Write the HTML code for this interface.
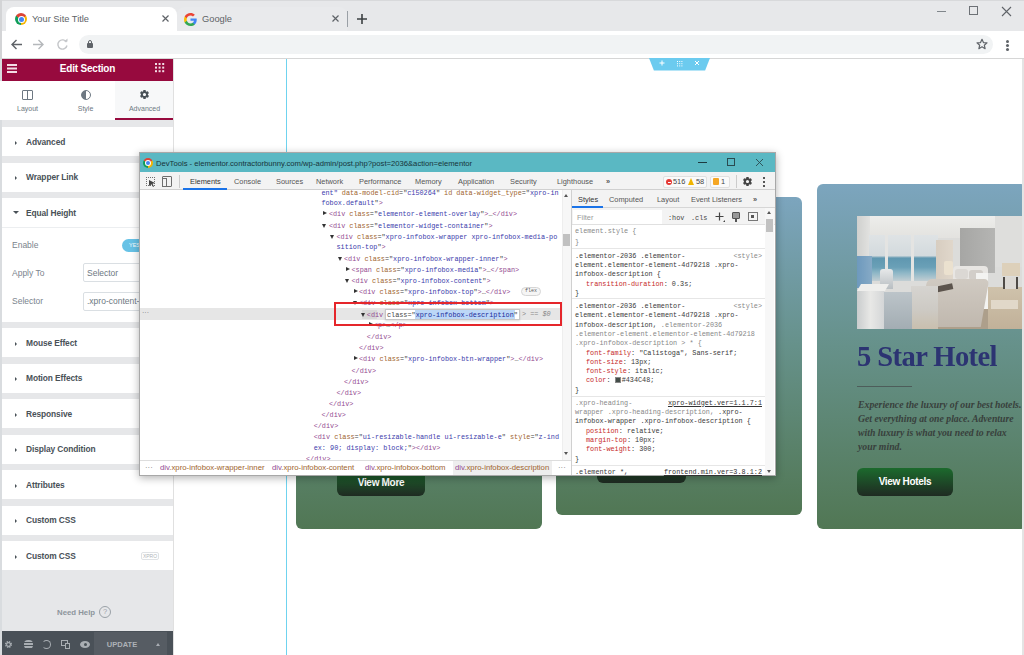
<!DOCTYPE html>
<html><head><meta charset="utf-8">
<style>
*{margin:0;padding:0;box-sizing:border-box}
html,body{width:1024px;height:655px;overflow:hidden;background:#fff;font-family:"Liberation Sans",sans-serif;position:relative}
.a{position:absolute}
.mono{font-family:"Liberation Mono",monospace}
/* chrome */
#strip{left:0;top:0;width:1024px;height:32px;background:#e7e8ea;border-top:1.5px solid #d8d9db}
#tab1{left:6px;top:7px;width:171px;height:25px;background:#fff;border-radius:8px 8px 0 0}
#toolbar{left:0;top:31px;width:1024px;height:27px;background:#fff}
#omni{left:79px;top:35px;width:914px;height:19px;background:#f1f3f4;border-radius:10px}
#tbline{left:0;top:58px;width:1024px;height:1px;background:#d6d6d6}
.tabt{font-size:9.3px;color:#606367;top:13.5px}
/* elementor panel */
#panel{left:0;top:59px;width:173px;height:596px;background:#e6e7e9}
#phead{left:2px;top:59px;width:171px;height:22px;background:#970a3e}
#ptabs{left:0;top:81px;width:173px;height:39px;background:#fff}
.row{left:2px;width:171px;height:29px;background:#fff}
.rlab{left:26px;font-size:8.4px;font-weight:bold;color:#495157;letter-spacing:-0.1px}
.ptl{top:104.5px;text-align:center;font-size:7px;color:#6d7882}
.clab{left:12px;font-size:8.5px;color:#7a848d}
.tri{left:15px;width:0;height:0;border-top:2.5px solid transparent;border-bottom:2.5px solid transparent;border-left:2.5px solid #495157;margin-top:0.5px}
#pbot{left:2px;top:631px;width:171px;height:24px;background:#4a5158}
/* cards */
.card{border-radius:6px;background:linear-gradient(#7ca5be 0%,#66918a 47%,#517754 100%)}
.btn{border-radius:6px;background:linear-gradient(#1c6a2d,#1f2a22);color:#fff;font-size:10px;font-weight:bold;text-align:center;line-height:27px;letter-spacing:-0.3px}
/* devtools */
.dl{font-family:"Liberation Mono",monospace;font-size:6.82px;line-height:11px;white-space:nowrap;color:#222}
.sl{font-family:"Liberation Mono",monospace;font-size:6.82px;line-height:10px;white-space:nowrap;color:#3a3a3a}
.tg{color:#934a91}.an{color:#a0642e}.av{color:#3b3bab}.tx{color:#444}.pn{color:#c62a2a}
.trr{position:absolute;width:0;height:0;border-top:2.5px solid transparent;border-bottom:2.5px solid transparent;border-left:4px solid #333}
.trd{position:absolute;width:0;height:0;border-left:2.5px solid transparent;border-right:2.5px solid transparent;border-top:4px solid #333}
.dtab{top:177px;font-size:7.4px;color:#555;white-space:nowrap}
.stab{top:195px;font-size:7.4px;color:#555;white-space:nowrap}
.bc{top:463px;font-family:"Liberation Sans",sans-serif;font-size:7.75px;white-space:nowrap}

#dt{left:139px;top:152px;width:637px;height:324px;background:#fff;border:1px solid #a8a8a8;box-shadow:0 2px 8px rgba(0,0,0,.3)}
</style></head><body>
<div class="a" id="strip"></div>
<div class="a" id="tab1"></div>
<div class="a" style="left:177px;top:7px;width:170px;height:25px;background:#e9eaec;border-radius:8px 8px 0 0"></div>
<div class="a" id="toolbar"></div>
<div class="a" id="omni"></div>
<div class="a" id="tbline"></div>
<div class="a" style="left:0;top:0;width:1.5px;height:59px;background:#d3d4d6"></div>
<!-- chrome favicon -->
<div class="a" style="left:15px;top:13px;width:12px;height:12px;border-radius:50%;background:conic-gradient(from -60deg,#db4437 0 120deg,#f4b400 120deg 240deg,#0f9d58 240deg 360deg)"></div>
<div class="a" style="left:17.5px;top:15.5px;width:7px;height:7px;border-radius:50%;background:#fff"></div>
<div class="a" style="left:18.5px;top:16.5px;width:5px;height:5px;border-radius:50%;background:#4285f4"></div>
<div class="a tabt" style="left:32px">Your Site Title</div>
<svg class="a" style="left:161px;top:14px" width="9" height="9" viewBox="0 0 9 9"><path d="M1.5 1.5L7.5 7.5M7.5 1.5L1.5 7.5" stroke="#5f6368" stroke-width="1.2"/></svg>
<!-- google G -->
<svg class="a" style="left:184px;top:13px" width="13" height="13" viewBox="0 0 24 24">
<path d="M23.5 12.3c0-.8-.1-1.6-.2-2.3H12v4.5h6.5c-.3 1.5-1.1 2.7-2.4 3.6v3h3.9c2.200-2.100 3.500-5.100 3.500-8.800z" fill="#4285f4"/>
<path d="M12 24c3.2 0 6-1.100 8-2.900l-3.900-3c-1.100.7-2.500 1.200-4.100 1.200-3.100 0-5.800-2.100-6.700-5H1.300v3.100C3.300 21.300 7.300 24 12 24z" fill="#34a853"/>
<path d="M5.300 14.300c-.2-.7-.4-1.500-.4-2.300s.1-1.600.4-2.300V6.600H1.300C.5 8.200 0 10 0 12s.5 3.800 1.300 5.400l4-3.100z" fill="#fbbc05"/>
<path d="M12 4.800c1.800 0 3.300.6 4.600 1.800l3.400-3.400C18 1.200 15.200 0 12 0 7.300 0 3.300 2.700 1.300 6.600l4 3.100c.9-2.800 3.600-4.900 6.700-4.900z" fill="#ea4335"/>
</svg>
<div class="a tabt" style="left:202px">Google</div>
<svg class="a" style="left:331px;top:14px" width="9" height="9" viewBox="0 0 9 9"><path d="M1.5 1.5L7.5 7.5M7.5 1.5L1.5 7.5" stroke="#5f6368" stroke-width="1.2"/></svg>
<div class="a" style="left:347px;top:11px;width:1px;height:16px;background:#9aa0a6"></div>
<svg class="a" style="left:356px;top:13px" width="12" height="12" viewBox="0 0 12 12"><path d="M6 1v10M1 6h10" stroke="#3c4043" stroke-width="1.6"/></svg>
<!-- window controls -->
<div class="a" style="left:937px;top:11px;width:9px;height:1px;background:#80868b"></div>
<div class="a" style="left:969px;top:6px;width:9px;height:9px;border:1px solid #6d7176"></div>
<svg class="a" style="left:1001px;top:6px" width="11" height="11" viewBox="0 0 11 11"><path d="M1 1L10 10M10 1L1 10" stroke="#5f6368" stroke-width="1.1"/></svg>
<!-- nav -->
<svg class="a" style="left:10px;top:38px" width="13" height="13" viewBox="0 0 13 13"><path d="M12 6.5H2M6.5 2L2 6.5L6.5 11" stroke="#5f6368" stroke-width="1.4" fill="none"/></svg>
<svg class="a" style="left:32px;top:38px" width="13" height="13" viewBox="0 0 13 13"><path d="M1 6.5H11M6.5 2L11 6.5L6.5 11" stroke="#b5b8bb" stroke-width="1.4" fill="none"/></svg>
<svg class="a" style="left:56px;top:38px" width="13" height="13" viewBox="0 0 13 13"><path d="M10.5 4.2A4.6 4.6 0 1 0 11 7.5" stroke="#c4c6c9" stroke-width="1.4" fill="none"/><path d="M8 3.5L11.5 3.5L11.5 0.5z" fill="#c4c6c9"/></svg>
<div class="a" style="left:87px;top:43px;width:6px;height:5px;background:#5f6368;border-radius:1px"></div>
<div class="a" style="left:88px;top:40px;width:4px;height:5px;border:1.1px solid #5f6368;border-radius:2px 2px 0 0"></div>
<svg class="a" style="left:976px;top:38px" width="12" height="12" viewBox="0 0 24 24"><path d="M12 2.5l2.9 6.6 7.100.6-5.400 4.700 1.600 7-6.200-3.700-6.200 3.700 1.600-7L2 9.700l7.100-.6z" stroke="#5f6368" stroke-width="2.4" fill="none" stroke-linejoin="round"/></svg>
<div class="a" style="left:1006px;top:40px;width:3px;height:3px;border-radius:50%;background:#5f6368;box-shadow:0 4px 0 #5f6368,0 8px 0 #5f6368"></div>

<div class="a" id="panel"></div>
<div class="a" style="left:0;top:59px;width:2px;height:596px;background:#d9dcdf"></div>
<div class="a" style="left:173px;top:59px;width:1px;height:596px;background:#e0e0e0"></div>
<div class="a" id="phead"></div>
<div class="a" style="left:7px;top:64px;width:10px;height:1.6px;background:#f3dde5;box-shadow:0 3.5px 0 #f3dde5,0 7px 0 #f3dde5"></div>
<div class="a" style="left:2px;top:62.5px;width:171px;text-align:center;font-size:10px;font-weight:bold;color:#fff;letter-spacing:-0.2px">Edit Section</div>
<div class="a" style="left:155px;top:63px;width:2.4px;height:2.4px;background:#f3dde5;box-shadow:3.6px 0 0 #f3dde5,7.2px 0 0 #f3dde5,0 3.6px 0 #f3dde5,3.6px 3.6px 0 #f3dde5,7.2px 3.6px 0 #f3dde5,0 7.2px 0 #f3dde5,3.6px 7.2px 0 #f3dde5,7.2px 7.2px 0 #f3dde5"></div>
<div class="a" id="ptabs"></div>
<div class="a" style="left:115px;top:81px;width:58px;height:39px;background:#f7f8f9"></div>
<div class="a" style="left:115px;top:118px;width:58px;height:2px;background:#970a3e"></div>
<!-- layout icon -->
<div class="a" style="left:22px;top:90px;width:11px;height:10px;border:1.3px solid #6d7882;border-radius:1px"></div>
<div class="a" style="left:27px;top:90px;width:1.3px;height:10px;background:#6d7882"></div>
<div class="a ptl" style="left:0;width:55px">Layout</div>
<!-- style icon -->
<div class="a" style="left:81px;top:90px;width:10px;height:10px;border-radius:50%;border:1.3px solid #6d7882;background:linear-gradient(90deg,#6d7882 50%,transparent 50%)"></div>
<div class="a ptl" style="left:58px;width:55px">Style</div>
<!-- gear -->
<svg class="a" style="left:139px;top:89px" width="11" height="11" viewBox="0 0 24 24"><path fill="#495157" d="M19.4 13c.04-.33.06-.66.06-1s-.02-.67-.06-1l2.1-1.650c.19-.15.24-.42.12-.64l-2-3.460c-.12-.22-.39-.3-.61-.22l-2.490 1c-.52-.4-1.080-.73-1.690-.98l-.38-2.650C14.460 2.180 14.250 2 14 2h-4c-.25 0-.46.18-.49.42l-.38 2.650c-.61.25-1.170.59-1.690.98l-2.490-1c-.23-.09-.49 0-.61.22l-2 3.460c-.13.22-.07.49.12.64L4.570 11c-.4.33-.6.66-.6 1s.2.67.6 1l-2.1 1.650c-.19.15-.24.42-.12.64l2 3.460c.12.22.39.3.61.22l2.490-1c.52.4 1.080.73 1.690.98l.38 2.650c.3.24.24.42.49.42h4c.25 0 .46-.18.49-.42l.38-2.650c.61-.25 1.170-.59 1.690-.98l2.490 1c.23.09.49 0 .61-.22l2-3.460c.12-.22.07-.49-.12-.64L19.400 13zM12 15.500c-1.930 0-3.500-1.570-3.500-3.500s1.570-3.500 3.500-3.500 3.500 1.570 3.500 3.500-1.570 3.500-3.500 3.500z"/></svg>
<div class="a ptl" style="left:116px;width:57px">Advanced</div>

<div class="a row" style="top:127px"></div>
<div class="a row" style="top:163px"></div>
<div class="a row" style="top:198px;height:124px"></div>
<div class="a" style="left:2px;top:227px;width:171px;height:1px;background:#eceef0"></div>
<div class="a row" style="top:328px"></div>
<div class="a row" style="top:364px"></div>
<div class="a row" style="top:399px"></div>
<div class="a row" style="top:435px"></div>
<div class="a row" style="top:470px"></div>
<div class="a row" style="top:506px"></div>
<div class="a row" style="top:541px"></div>

<div class="a tri" style="top:140px"></div><div class="a rlab" style="top:137px">Advanced</div>
<div class="a tri" style="top:175px"></div><div class="a rlab" style="top:172px">Wrapper Link</div>
<div class="a" style="left:13px;top:211px;width:0;height:0;border-left:3px solid transparent;border-right:3px solid transparent;border-top:3px solid #495157"></div><div class="a rlab" style="top:208px">Equal Height</div>
<div class="a tri" style="top:341px"></div><div class="a rlab" style="top:338px">Mouse Effect</div>
<div class="a tri" style="top:376px"></div><div class="a rlab" style="top:373px">Motion Effects</div>
<div class="a tri" style="top:412px"></div><div class="a rlab" style="top:409px">Responsive</div>
<div class="a tri" style="top:447px"></div><div class="a rlab" style="top:444px">Display Condition</div>
<div class="a tri" style="top:483px"></div><div class="a rlab" style="top:480px">Attributes</div>
<div class="a tri" style="top:518px"></div><div class="a rlab" style="top:515px">Custom CSS</div>
<div class="a tri" style="top:554px"></div><div class="a rlab" style="top:551px">Custom CSS</div>
<div class="a" style="left:141px;top:552px;width:18px;height:8px;border:1px solid #dfe2e5;border-radius:2px;font-size:5px;color:#b0b5ba;text-align:center;line-height:6px">XPRO</div>

<div class="a clab" style="top:240px">Enable</div>
<div class="a" style="left:122px;top:239px;width:30px;height:13px;border-radius:7px;background:#67c2e6"></div>
<div class="a" style="left:129px;top:242px;font-size:5.5px;color:#fff">YES</div>
<div class="a clab" style="top:268px">Apply To</div>
<div class="a" style="left:83px;top:263px;width:70px;height:19px;border:1px solid #dadfe3;border-radius:2px;background:#fff"></div>
<div class="a clab" style="left:87px;top:268px;color:#6d7882">Selector</div>
<div class="a clab" style="top:296px">Selector</div>
<div class="a" style="left:83px;top:292px;width:70px;height:19px;border:1px solid #dadfe3;border-radius:2px;background:#fff"></div>
<div class="a clab" style="left:87px;top:296px;color:#6d7882">.xpro-content-wrap</div>

<div class="a" style="left:57px;top:608px;font-size:7.8px;font-weight:bold;color:#8d959c;white-space:nowrap">Need Help</div><div class="a" style="left:99px;top:606px;width:12px;height:12px;border:1px solid #9aa1a7;border-radius:50%;font-size:7.5px;line-height:10px;text-align:center;color:#9aa1a7">?</div>
<div class="a" id="pbot"></div>
<div class="a" style="left:94px;top:632px;width:73px;height:23px;background:#565c63"></div>
<div class="a" style="left:94px;top:639.5px;width:56px;text-align:center;font-size:7.5px;font-weight:bold;color:#adb2b7;letter-spacing:0px">UPDATE</div>
<div class="a" style="left:156px;top:643px;width:0;height:0;border-left:2.5px solid transparent;border-right:2.5px solid transparent;border-bottom:3px solid #a9aeb3"></div>
<svg class="a" style="left:4px;top:640px" width="9" height="9" viewBox="0 0 24 24"><circle cx="12" cy="12" r="7" fill="none" stroke="#a9aeb3" stroke-width="5" stroke-dasharray="3.3 2.200"/><circle cx="12" cy="12" r="5" fill="none" stroke="#a9aeb3" stroke-width="3"/></svg>
<div class="a" style="left:24px;top:640px;width:9px;height:9px;border-radius:45%;background:repeating-linear-gradient(#a9aeb3 0 2px,#495157 2px 3px)"></div>
<div class="a" style="left:42px;top:640px;width:9px;height:9px;border-radius:50%;border:1.4px solid #a9aeb3;border-left-color:transparent"></div>
<div class="a" style="left:61px;top:640px;width:7px;height:6px;border:1.3px solid #a9aeb3"></div>
<div class="a" style="left:65px;top:643px;width:5px;height:6px;border:1.3px solid #a9aeb3;background:#495157"></div>
<div class="a" style="left:80px;top:641px;width:10px;height:7px;border-radius:50%;background:#a9aeb3"></div>
<div class="a" style="left:83.5px;top:643px;width:3px;height:3px;border-radius:50%;background:#495157"></div>

<div class="a" style="left:286px;top:59px;width:1px;height:596px;background:#6fd3ef"></div>
<div class="a card" style="left:296px;top:197px;width:246px;height:332px"></div>
<div class="a card" style="left:556px;top:197px;width:246px;height:318px"></div>
<div class="a card" style="left:817px;top:184px;width:210px;height:345px"></div>
<div class="a btn" style="left:337px;top:469px;width:88px;height:27px">View More</div>
<div class="a btn" style="left:597px;top:456px;width:89px;height:27px">View Hotels</div>
<!-- card 3 -->
<div class="a" id="img" style="left:857px;top:216px;width:165px;height:113px;overflow:hidden;background:#dcdcda;filter:blur(0.5px)">
 <div class="a" style="left:0;top:0;width:165px;height:22px;background:linear-gradient(#ededeb,#e3e2df)"></div>
 <div class="a" style="left:0;top:0;width:13px;height:42px;background:linear-gradient(90deg,#cfd0ce,#e2e2e0)"></div>
 <div class="a" style="left:12px;top:19px;width:69px;height:46px;background:linear-gradient(#dfe3e5 0,#d3dadd 45%,#5f97b0 50%,#6aa0b7 70%,#8db6c6 82%,#c2ced3 100%)"></div>
 <div class="a" style="left:28px;top:19px;width:3px;height:46px;background:#e4e4e2"></div>
 <div class="a" style="left:54px;top:19px;width:3px;height:46px;background:#e4e4e2"></div>
 <div class="a" style="left:0;top:40px;width:15px;height:38px;background:linear-gradient(90deg,#6d99bd,#86aac6)"></div>
 <div class="a" style="left:23px;top:53px;width:13px;height:20px;background:linear-gradient(#e6e8e9,#b8bec2);border-radius:3px 3px 0 0"></div>
 <div class="a" style="left:79px;top:24px;width:17px;height:40px;background:linear-gradient(90deg,#d7cdc0,#e0d7cb)"></div>
 <div class="a" style="left:87px;top:45px;width:9px;height:14px;background:#ebe1cf;border-radius:2px"></div>
 <div class="a" style="left:138px;top:0;width:27px;height:51px;background:#dededc"></div>
 <div class="a" style="left:103px;top:12px;width:35px;height:45px;background:linear-gradient(90deg,#a6a6a4,#b5b5b3)"></div>
 <div class="a" style="left:96px;top:50px;width:35px;height:21px;background:#e8e6e3;border-radius:4px"></div>
 <div class="a" style="left:98px;top:53px;width:13px;height:10px;background:#dbd8d4;border-radius:3px"></div>
 <div class="a" style="left:112px;top:54px;width:14px;height:10px;background:#d2cec9;border-radius:3px"></div>
 <div class="a" style="left:119px;top:57px;width:12px;height:37px;background:#f3f3f1"></div>
 <div class="a" style="left:80px;top:93px;width:85px;height:20px;background:#ad9f8b"></div>
 <div class="a" style="left:66px;top:63px;width:62px;height:48px;background:linear-gradient(#d0cac2,#c0b8ae);border-radius:5px 5px 0 0;transform:skewX(-10deg)"></div>
 <div class="a" style="left:68px;top:70px;width:28px;height:6px;background:#5c544d;transform:rotate(-12deg)"></div>
 <div class="a" style="left:131px;top:71px;width:34px;height:42px;background:linear-gradient(#cfc2ab,#c1b199)"></div>
 <div class="a" style="left:134px;top:84px;width:27px;height:9px;background:#e1d8c9"></div>
 <div class="a" style="left:145px;top:47px;width:18px;height:13px;background:#ddd0ba"></div>
 <div class="a" style="left:146px;top:61px;width:15px;height:12px;border-left:2.5px solid #4e4a46;border-right:2.5px solid #4e4a46;background:#dcd9d4"></div>
 <div class="a" style="left:54px;top:70px;width:27px;height:43px;background:linear-gradient(#d6d4d0 0,#cdcac4 55%,#c9bfae 100%)"></div>
 <div class="a" style="left:25px;top:76px;width:30px;height:37px;background:linear-gradient(#bcc4c9,#a3adb3)"></div>
 <div class="a" style="left:0;top:72px;width:27px;height:41px;background:linear-gradient(90deg,#c9cccd,#e8e8e6 50%,#d4d6d7)"></div>
 <div class="a" style="left:2px;top:68px;width:28px;height:7px;background:#eeeeec;transform:skewX(-30deg)"></div>
</div>
<div class="a" style="left:857px;top:340px;font-family:'Liberation Serif',serif;font-size:29px;font-weight:bold;color:#2c3472;white-space:nowrap;letter-spacing:-0.6px;transform:scaleX(0.985);transform-origin:0 0">5 Star Hotel</div>
<div class="a" style="left:857px;top:385.5px;width:55px;height:1.5px;background:#4d5d5a"></div>
<div class="a" style="left:858px;top:398px;width:170px;font-family:'Liberation Serif',serif;font-style:italic;font-weight:bold;font-size:9.75px;line-height:13.9px;color:#38403c;white-space:nowrap">Experience the luxury of our best hotels.<br>Get everything at one place. Adventure<br>with luxury is what you need to relax<br>your mind.</div>
<div class="a btn" style="left:857px;top:468px;width:96px;height:27.5px">View Hotels</div>
<!-- section handle -->
<div class="a" style="left:649px;top:58px;width:61px;height:12.5px;background:#6ccbef;clip-path:polygon(0 0,100% 0,92% 100%,8% 100%)"></div>
<svg class="a" style="left:658px;top:59px" width="8" height="8" viewBox="0 0 8 8"><path d="M4 1.500V6.500M1.500 4H6.500" stroke="#fff" stroke-width="1"/></svg>
<div class="a" style="left:677px;top:60.5px;width:1.2px;height:1.2px;background:#fff;box-shadow:2.2px 0 0 #fff,4.4px 0 0 #fff,0 2.2px 0 #fff,2.2px 2.2px 0 #fff,4.4px 2.2px 0 #fff,0 4.4px 0 #fff,2.2px 4.4px 0 #fff,4.4px 4.4px 0 #fff"></div>
<svg class="a" style="left:693px;top:59px" width="8" height="8" viewBox="0 0 8 8"><path d="M2 2L6 6M6 2L2 6" stroke="#fff" stroke-width="1"/></svg>
<div class="a" style="left:1022px;top:59px;width:2px;height:596px;background:#e4e4e4"></div>
<div class="a" id="dt"></div>
<div class="a" style="left:140px;top:153px;width:635px;height:19px;background:#5ab8c3"></div>
<div class="a" style="left:143px;top:158px;width:10px;height:10px;border-radius:50%;background:conic-gradient(from -60deg,#db4437 0 120deg,#f4b400 120deg 240deg,#0f9d58 240deg 360deg)"></div>
<div class="a" style="left:145px;top:160px;width:6px;height:6px;border-radius:50%;background:#fff"></div>
<div class="a" style="left:146px;top:161px;width:4px;height:4px;border-radius:50%;background:#4285f4"></div>
<div class="a" style="left:156px;top:158.5px;font-size:7.66px;color:#17343a;white-space:nowrap">DevTools - elementor.contractorbunny.com/wp-admin/post.php?post=2036&amp;action=elementor</div>
<div class="a" style="left:698px;top:162px;width:9px;height:1px;background:#1d3a40"></div>
<div class="a" style="left:727px;top:158px;width:8px;height:8px;border:1px solid #2a4a50"></div>
<svg class="a" style="left:755px;top:158px" width="9" height="9" viewBox="0 0 9 9"><path d="M1 1L8 8M8 1L1 8" stroke="#2a4a50" stroke-width="0.9"/></svg>
<!-- toolbar -->
<div class="a" style="left:140px;top:172px;width:635px;height:18px;background:#f3f3f3;border-bottom:1px solid #d0d0d0"></div>
<div class="a" style="left:146px;top:177px;width:9px;height:9px;border:1px dotted #6e6e6e"></div>
<svg class="a" style="left:149px;top:180px" width="7" height="7" viewBox="0 0 7 7"><path d="M0 0L6 3L3.500 3.800L5 6.500L4 7L2.600 4.300L0 6z" fill="#444"/></svg>
<div class="a" style="left:162px;top:176px;width:10px;height:11px;border:1.1px solid #6e6e6e;border-radius:1px"></div>
<div class="a" style="left:162px;top:178px;width:5px;height:9px;border:1.1px solid #6e6e6e;background:#f3f3f3"></div>
<div class="a" style="left:179px;top:175px;width:1px;height:13px;background:#ccc"></div>
<div class="a dtab" style="left:190px;color:#333">Elements</div>
<div class="a" style="left:183px;top:188px;width:44px;height:2px;background:#1a73e8"></div>
<div class="a dtab" style="left:234px">Console</div>
<div class="a dtab" style="left:276px">Sources</div>
<div class="a dtab" style="left:316px">Network</div>
<div class="a dtab" style="left:359px">Performance</div>
<div class="a dtab" style="left:415px">Memory</div>
<div class="a dtab" style="left:458px">Application</div>
<div class="a dtab" style="left:510px">Security</div>
<div class="a dtab" style="left:557px">Lighthouse</div>
<div class="a dtab" style="left:606px;font-weight:bold">»</div>
<div class="a" style="left:663px;top:176px;width:44px;height:12px;border:1px solid #e0e0e0;border-radius:2px;background:#fafafa"></div>
<div class="a" style="left:666px;top:179px;width:6px;height:6px;border-radius:50%;background:#e53935"></div>
<div class="a" style="left:667.5px;top:181.5px;width:3px;height:1px;background:#fff"></div>
<div class="a dtab" style="left:673px;top:177px;color:#444">516</div>
<div class="a" style="left:688px;top:178px;width:0;height:0;border-left:3.5px solid transparent;border-right:3.5px solid transparent;border-bottom:7px solid #f0b400"></div>
<div class="a dtab" style="left:696px;top:177px;color:#444">58</div>
<div class="a" style="left:710px;top:176px;width:20px;height:12px;border:1px solid #e0e0e0;border-radius:2px;background:#fafafa"></div>
<div class="a" style="left:713px;top:178px;width:6px;height:7px;background:#f5a623;border-radius:1px"></div>
<div class="a dtab" style="left:721px;top:177px;color:#444">1</div>
<div class="a" style="left:736px;top:175px;width:1px;height:13px;background:#ccc"></div>
<svg class="a" style="left:742px;top:176px" width="11" height="11" viewBox="0 0 24 24"><path fill="#444" d="M19.4 13c.04-.33.06-.66.06-1s-.02-.67-.06-1l2.1-1.650c.19-.15.24-.42.12-.64l-2-3.460c-.12-.22-.39-.3-.61-.22l-2.490 1c-.52-.4-1.080-.73-1.690-.98l-.38-2.650C14.460 2.180 14.250 2 14 2h-4c-.25 0-.46.18-.49.42l-.38 2.650c-.61.25-1.170.59-1.690.98l-2.490-1c-.23-.09-.49 0-.61.22l-2 3.460c-.13.22-.07.49.12.64L4.570 11c-.4.33-.6.66-.6 1s.2.67.6 1l-2.1 1.650c-.19.15-.24.42-.12.64l2 3.460c.12.22.39.3.61.22l2.490-1c.52.4 1.080.73 1.690.98l.38 2.650c.3.24.24.42.49.42h4c.25 0 .46-.18.49-.42l.38-2.650c.61-.25 1.170-.59 1.690-.98l2.490 1c.23.09.49 0 .61-.22l2-3.460c.12-.22.07-.49-.12-.64L19.400 13zM12 15.500c-1.930 0-3.500-1.570-3.500-3.500s1.570-3.500 3.500-3.500 3.500 1.570 3.500 3.500-1.570 3.500-3.500 3.500z"/></svg>
<div class="a" style="left:763px;top:177px;width:2px;height:2px;background:#555;box-shadow:0 4px 0 #555,0 8px 0 #555"></div>
<!-- elements panel -->
<div class="a" style="left:140px;top:308px;width:422px;height:12px;background:#e6e6e6"></div>
<div class="a" style="left:142px;top:309px;font-size:7px;color:#777">···</div>
<div class="a dl" style="left:321.4px;top:188.1px"><span class="av">ent"</span> <span class="an">data-model-cid</span><span class="tx">="</span><span class="av">c150264</span><span class="tx">"</span> <span class="an">id</span> <span class="an">data-widget_type</span><span class="tx">="</span><span class="av">xpro-in</span></div>
<div class="a dl" style="left:321.4px;top:198.3px"><span class="av">fobox.default</span><span class="tx">"</span><span class="tg">&gt;</span></div>
<div class="a dl" style="left:328.9px;top:209.3px"><span class="tg">&lt;div</span> <span class="an">class</span><span class="tx">="</span><span class="av">elementor-element-overlay</span><span class="tx">"</span><span class="tg">&gt;</span><span class="tx">…</span><span class="tg">&lt;/div&gt;</span></div>
<div class="a trr" style="left:322.5px;top:211.3px"></div>
<div class="a dl" style="left:328.9px;top:220.5px"><span class="tg">&lt;div</span> <span class="an">class</span><span class="tx">="</span><span class="av">elementor-widget-container</span><span class="tx">"</span><span class="tg">&gt;</span></div>
<div class="a trd" style="left:322.0px;top:223.5px"></div>
<div class="a dl" style="left:336.5px;top:232.1px"><span class="tg">&lt;div</span> <span class="an">class</span><span class="tx">="</span><span class="av">xpro-infobox-wrapper xpro-infobox-media-po</span></div>
<div class="a trd" style="left:330.0px;top:235.1px"></div>
<div class="a dl" style="left:336.5px;top:242.2px"><span class="av">sition-top</span><span class="tx">"</span><span class="tg">&gt;</span></div>
<div class="a dl" style="left:344.0px;top:253.5px"><span class="tg">&lt;div</span> <span class="an">class</span><span class="tx">="</span><span class="av">xpro-infobox-wrapper-inner</span><span class="tx">"</span><span class="tg">&gt;</span></div>
<div class="a trd" style="left:338.0px;top:256.5px"></div>
<div class="a dl" style="left:351.5px;top:265.0px"><span class="tg">&lt;span</span> <span class="an">class</span><span class="tx">="</span><span class="av">xpro-infobox-media</span><span class="tx">"</span><span class="tg">&gt;</span><span class="tx">…</span><span class="tg">&lt;/span&gt;</span></div>
<div class="a trr" style="left:345.5px;top:267.0px"></div>
<div class="a dl" style="left:351.5px;top:275.5px"><span class="tg">&lt;div</span> <span class="an">class</span><span class="tx">="</span><span class="av">xpro-infobox-content</span><span class="tx">"</span><span class="tg">&gt;</span></div>
<div class="a trd" style="left:345.0px;top:278.5px"></div>
<div class="a dl" style="left:359.0px;top:287.0px"><span class="tg">&lt;div</span> <span class="an">class</span><span class="tx">="</span><span class="av">xpro-infobox-top</span><span class="tx">"</span><span class="tg">&gt;</span><span class="tx">…</span><span class="tg">&lt;/div&gt;</span></div>
<div class="a trr" style="left:353.5px;top:289.0px"></div>
<div class="a dl" style="left:359.0px;top:297.8px"><span class="tg">&lt;div</span> <span class="an">class</span><span class="tx">="</span><span class="av">xpro-infobox-bottom</span><span class="tx">"</span><span class="tg">&gt;</span></div>
<div class="a trd" style="left:353.0px;top:300.8px"></div>
<div class="a dl" style="left:374.0px;top:320.0px"><span class="tg">&lt;p&gt;</span><span class="tx">…</span><span class="tg">&lt;/p&gt;</span></div>
<div class="a trr" style="left:368.5px;top:322.0px"></div>
<div class="a dl" style="left:366.8px;top:331.8px"><span class="tg">&lt;/div&gt;</span></div>
<div class="a dl" style="left:359.0px;top:342.8px"><span class="tg">&lt;/div&gt;</span></div>
<div class="a dl" style="left:359.0px;top:354.0px"><span class="tg">&lt;div</span> <span class="an">class</span><span class="tx">="</span><span class="av">xpro-infobox-btn-wrapper</span><span class="tx">"</span><span class="tg">&gt;</span><span class="tx">…</span><span class="tg">&lt;/div&gt;</span></div>
<div class="a trr" style="left:353.5px;top:356.0px"></div>
<div class="a dl" style="left:351.5px;top:365.5px"><span class="tg">&lt;/div&gt;</span></div>
<div class="a dl" style="left:344.0px;top:376.5px"><span class="tg">&lt;/div&gt;</span></div>
<div class="a dl" style="left:336.5px;top:387.5px"><span class="tg">&lt;/div&gt;</span></div>
<div class="a dl" style="left:328.9px;top:399.4px"><span class="tg">&lt;/div&gt;</span></div>
<div class="a dl" style="left:321.4px;top:410.4px"><span class="tg">&lt;/div&gt;</span></div>
<div class="a dl" style="left:313.7px;top:421.4px"><span class="tg">&lt;/div&gt;</span></div>
<div class="a dl" style="left:313.7px;top:432.4px"><span class="tg">&lt;div</span> <span class="an">class</span><span class="tx">="</span><span class="av">ui-resizable-handle ui-resizable-e</span><span class="tx">"</span> <span class="an">style</span><span class="tx">="</span><span class="av">z-ind</span></div>
<div class="a dl" style="left:313.7px;top:443.3px"><span class="av">ex: 90; display: block;</span><span class="tx">"</span><span class="tg">&gt;&lt;/div&gt;</span></div>
<div class="a dl" style="left:306.0px;top:454.0px"><span class="tg">&lt;/div&gt;</span></div>
<div class="a" style="left:362px;top:310px;width:15px;height:9px;background:#d8d8d8"></div>
<div class="a trd" style="left:360.5px;top:312.5px"></div>
<div class="a dl" style="left:366.8px;top:309.5px"><span class="tg">&lt;div</span></div>
<div class="a" style="left:385px;top:309px;width:135px;height:11px;background:#fff;border:1px solid #c6c6c6;box-shadow:0 1px 2px rgba(0,0,0,.15)"></div>
<div class="a" style="left:415px;top:310px;width:100px;height:9px;background:#bcd7f7"></div>
<div class="a dl" style="left:387px;top:309.5px"><span class="tx">class="</span><span class="av" style="color:#1b2a9a">xpro-infobox-description</span><span class="tx">"</span></div>
<div class="a dl" style="left:522px;top:308.5px;color:#888"><span>&gt; == </span><i>$0</i></div>
<div class="a" style="left:521px;top:287px;width:20px;height:9px;border:1px solid #d5d5d5;border-radius:5px;background:#f5f5f5;font-size:5px;line-height:7px;color:#555;text-align:center;font-family:'Liberation Mono',monospace">flex</div>
<div class="a" style="left:333.5px;top:302.3px;width:228.5px;height:24px;border:2px solid #e5262b"></div>
<!-- elements scrollbar -->
<div class="a" style="left:562px;top:190px;width:9px;height:270px;background:#f7f7f7;border-left:1px solid #eee"></div>
<div class="a" style="left:564px;top:194px;width:0;height:0;border-left:2.5px solid transparent;border-right:2.5px solid transparent;border-bottom:3px solid #555"></div>
<div class="a" style="left:563px;top:234px;width:7px;height:12px;background:#c1c1c1"></div>
<div class="a" style="left:564px;top:452px;width:0;height:0;border-left:2.5px solid transparent;border-right:2.5px solid transparent;border-top:3px solid #555"></div>
<!-- breadcrumb -->
<div class="a" style="left:140px;top:460px;width:431px;height:15px;background:#fff;border-top:1px solid #ddd"></div>
<div class="a" style="left:453px;top:461px;width:99px;height:14px;background:#eeeeee"></div>
<div class="a bc" style="left:145px;color:#777">···</div>
<div class="a bc" style="left:160px"><span class="tg">div</span><span class="an">.xpro-infobox-wrapper-inner</span></div>
<div class="a bc" style="left:272px"><span class="tg">div</span><span class="an">.xpro-infobox-content</span></div>
<div class="a bc" style="left:365px"><span class="tg">div</span><span class="an">.xpro-infobox-bottom</span></div>
<div class="a bc" style="left:455px"><span class="tg">div</span><span class="an">.xpro-infobox-description</span></div>
<div class="a bc" style="left:558px;color:#777">···</div>
<!-- styles pane -->
<div class="a" style="left:571px;top:190px;width:1px;height:285px;background:#d0d0d0"></div>
<div class="a" style="left:572px;top:190px;width:203px;height:18px;background:#f3f3f3;border-bottom:1px solid #d6d6d6"></div>
<div class="a stab" style="left:578px;color:#333">Styles</div>
<div class="a" style="left:572px;top:206px;width:31px;height:2px;background:#1a73e8"></div>
<div class="a stab" style="left:609px">Computed</div>
<div class="a stab" style="left:657px">Layout</div>
<div class="a stab" style="left:691px">Event Listeners</div>
<div class="a stab" style="left:753px;font-weight:bold">»</div>
<div class="a" style="left:572px;top:208px;width:203px;height:17px;background:#f3f3f3;border-bottom:1px solid #e0e0e0"></div>
<div class="a" style="left:573px;top:210px;width:89px;height:14px;background:#fff"></div>
<div class="a stab" style="left:577px;top:212.5px;color:#999">Filter</div>
<div class="a sl" style="left:668px;top:212.5px;color:#444">:hov</div>
<div class="a sl" style="left:691px;top:212.5px;color:#444">.cls</div>
<svg class="a" style="left:715px;top:212px" width="9" height="9" viewBox="0 0 9 9"><path d="M4.500 0.500V8.500M0.500 4.500H8.500" stroke="#444" stroke-width="1.2"/></svg>
<div class="a" style="left:723px;top:220px;width:0;height:0;border-left:2px solid transparent;border-bottom:2px solid #444"></div>
<div class="a" style="left:732px;top:212px;width:8px;height:7px;border:1.3px solid #555;border-radius:1px;background:#999"></div>
<div class="a" style="left:735px;top:219px;width:2px;height:3px;background:#555"></div>
<div class="a" style="left:748px;top:212px;width:10px;height:9px;border:1px solid #777"></div>
<div class="a" style="left:751px;top:215px;width:3px;height:3px;background:#555"></div>
<!-- styles scrollbar -->
<div class="a" style="left:765px;top:208px;width:9px;height:267px;background:#f7f7f7"></div>
<div class="a" style="left:767px;top:211px;width:0;height:0;border-left:2.5px solid transparent;border-right:2.5px solid transparent;border-bottom:3px solid #555"></div>
<div class="a" style="left:766px;top:219px;width:7px;height:13px;background:#c1c1c1"></div>
<div class="a" style="left:767px;top:470px;width:0;height:0;border-left:2.5px solid transparent;border-right:2.5px solid transparent;border-top:3px solid #555"></div>
<div class="a sl" style="left:575.0px;top:226.2px"><span style="color:#888">element.style {</span></div>
<div class="a sl" style="left:575.0px;top:237.0px"><span style="color:#888">}</span></div>
<div class="a" style="left:572px;top:248px;width:193px;height:1px;background:#e6e6e6"></div>
<div class="a sl" style="left:575.0px;top:250.5px">.elementor-2036 .elementor-</div>
<div class="a sl" style="left:700px;top:250.5px;width:62px;text-align:right;color:#888">&lt;style&gt;</div>
<div class="a sl" style="left:575.0px;top:259.5px">element.elementor-element-4d79218 .xpro-</div>
<div class="a sl" style="left:575.0px;top:268.6px">infobox-description {</div>
<div class="a sl" style="left:586.0px;top:278.6px"><span class="pn">transition-duration</span>: 0.3s;</div>
<div class="a sl" style="left:575.0px;top:287.7px">}</div>
<div class="a" style="left:572px;top:298px;width:193px;height:1px;background:#e6e6e6"></div>
<div class="a sl" style="left:575.0px;top:301.0px">.elementor-2036 .elementor-</div>
<div class="a sl" style="left:700px;top:301px;width:62px;text-align:right;color:#888">&lt;style&gt;</div>
<div class="a sl" style="left:575.0px;top:310.3px">element.elementor-element-4d79218 .xpro-</div>
<div class="a sl" style="left:575.0px;top:319.6px">infobox-description, <span style="color:#888">.elementor-2036</span></div>
<div class="a sl" style="left:575.0px;top:328.9px"><span style="color:#888">.elementor-element.elementor-element-4d79218</span></div>
<div class="a sl" style="left:575.0px;top:338.2px"><span style="color:#888">.xpro-infobox-description &gt; * {</span></div>
<div class="a sl" style="left:586.0px;top:347.5px"><span class="pn">font-family</span>: "Calistoga", Sans-serif;</div>
<div class="a sl" style="left:586.0px;top:356.8px"><span class="pn">font-size</span>: 13px;</div>
<div class="a sl" style="left:586.0px;top:366.1px"><span class="pn">font-style</span>: italic;</div>
<div class="a sl" style="left:586.0px;top:375.4px"><span class="pn">color</span>: <span style="display:inline-block;width:6px;height:6px;background:#434c48;border:0.5px solid #888;vertical-align:-0.5px;margin-right:1px"></span>#434C48;</div>
<div class="a sl" style="left:575.0px;top:384.7px">}</div>
<div class="a" style="left:572px;top:396px;width:193px;height:1px;background:#e6e6e6"></div>
<div class="a sl" style="left:575.0px;top:397.6px"><span style="color:#888">.xpro-heading-</span></div>
<div class="a sl" style="left:660px;top:397.6px;width:102px;text-align:right;color:#333;text-decoration:underline">xpro-widget.ver=1.1.7:1</div>
<div class="a sl" style="left:575.0px;top:406.9px"><span style="color:#888">wrapper .xpro-heading-description,</span> .xpro-</div>
<div class="a sl" style="left:575.0px;top:416.2px">infobox-wrapper .xpro-infobox-description {</div>
<div class="a sl" style="left:586.0px;top:425.8px"><span class="pn">position</span>: relative;</div>
<div class="a sl" style="left:586.0px;top:435.1px"><span class="pn">margin-top</span>: 10px;</div>
<div class="a sl" style="left:586.0px;top:444.4px"><span class="pn">font-weight</span>: 300;</div>
<div class="a sl" style="left:575.0px;top:453.7px">}</div>
<div class="a" style="left:572px;top:465px;width:193px;height:1px;background:#e6e6e6"></div>
<div class="a sl" style="left:575.0px;top:467.0px">.elementor *,</div>
<div class="a sl" style="left:660px;top:467px;width:102px;text-align:right;color:#333;text-decoration:underline">frontend.min.ver=3.8.1:2</div>
</body></html>
